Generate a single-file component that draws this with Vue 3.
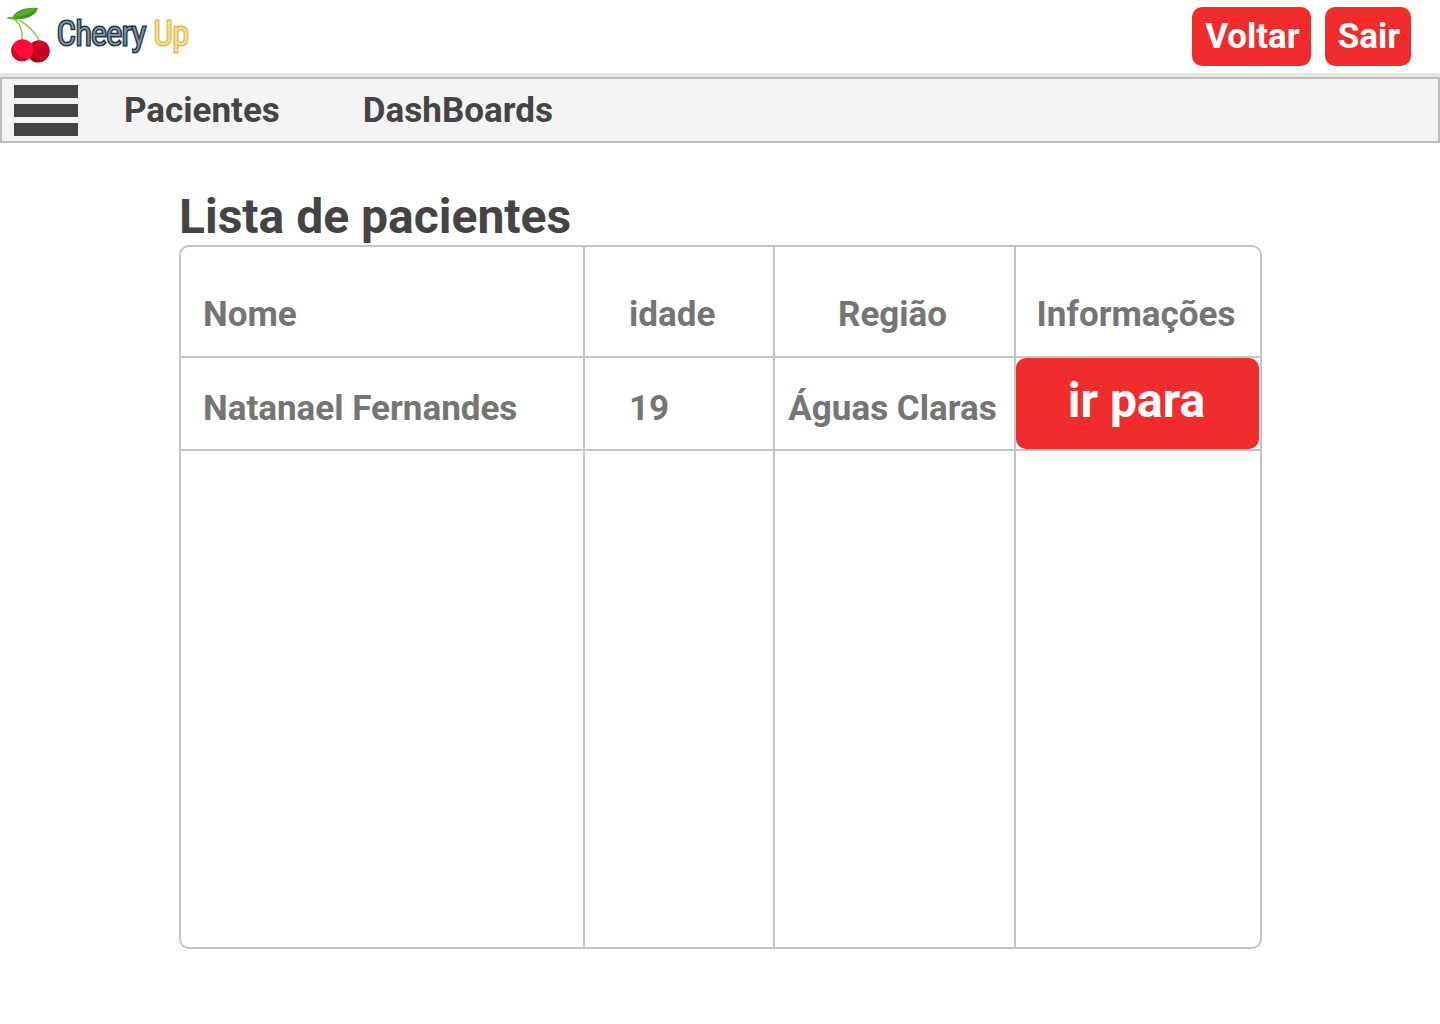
<script setup>
const patients = [{ name: 'Natanael Fernandes', age: 19, region: 'Águas Claras' }]
</script>

<template>
  <div class="page">
    <header class="topbar">
      <a class="brand" href="#" aria-label="CheeryUp">
        <svg class="cherries" viewBox="0 0 44 56" aria-hidden="true">
          <path d="M4 11 C11 13 16 21 15 33" fill="none" stroke="#7ed348" stroke-width="1.5" />
          <path d="M4 11 C15 12 27 23 33 35" fill="none" stroke="#7ed348" stroke-width="1.5" />
          <path d="M0 10 L5 10 L9 13 L1 12 Z" fill="#6cc238" />
          <path d="M5 11 C8 4 17 0 31 1 C28 10 17 14 5 11 Z" fill="#3f9122" />
          <path d="M5 11 C10 4 20 1 31 1 C24 7 15 9 5 11 Z" fill="#5bab2b" />
          <circle cx="32" cy="44" r="10.800" fill="#c90024" />
          <path d="M24 36.500 A10.800 10.800 0 1 0 38 53 C30 54.500 24 49.500 27 42.500 Z" fill="#a7001f" />
          <circle cx="15.500" cy="43" r="10.800" fill="#ff0d37" />
          <path d="M6 37.500 A10.800 10.800 0 0 0 22.500 51.300 C13 52 6 46 6 37.500 Z" fill="#cd0a2c" />
        </svg>
        <span class="wordmark"><span class="cheery">Cheery</span><span class="up">Up</span></span>
      </a>
      <div class="actions">
        <button type="button" class="btn">Voltar</button>
        <button type="button" class="btn">Sair</button>
      </div>
    </header>

    <nav class="menu">
      <button type="button" class="burger" aria-label="Menu">
        <span></span><span></span><span></span>
      </button>
      <a href="#">Pacientes</a>
      <a href="#">DashBoards</a>
    </nav>

    <main class="content">
      <h1>Lista de pacientes</h1>
      <table>
        <colgroup>
          <col />
          <col class="col-age" />
          <col class="col-region" />
          <col class="col-info" />
        </colgroup>
        <thead>
          <tr>
            <th scope="col">Nome</th>
            <th scope="col" class="age">idade</th>
            <th scope="col" class="center">Região</th>
            <th scope="col" class="center">Informações</th>
          </tr>
        </thead>
        <tbody>
          <tr v-for="p in patients" :key="p.name" class="patient">
            <td>{{ p.name }}</td>
            <td class="age">{{ p.age }}</td>
            <td class="center">{{ p.region }}</td>
            <td class="go"><button type="button" class="btn-go">ir para</button></td>
          </tr>
          <tr class="filler"><td></td><td></td><td></td><td></td></tr>
        </tbody>
      </table>
    </main>
  </div>
</template>

<style>
body {
  margin: 0;
  background: #fff;
}
</style>

<style scoped>
.page {
  font-family: Roboto, sans-serif;
  font-weight: 700;
  color: #444;
}
.topbar {
  display: flex;
  justify-content: space-between;
  padding: 7px 29px 7px 7px;
  border-bottom: 4px solid #e6e6e6;
}
.brand {
  display: flex;
  gap: 6px;
  text-decoration: none;
}
.cherries {
  width: 44px;
  height: 56px;
}
.wordmark {
  display: flex;
  gap: 8px;
  font: 300 33px/54px "Roboto Condensed", Roboto, sans-serif;
  color: #8794a1;
  paint-order: stroke fill;
}
.cheery {
  -webkit-text-stroke: 3px #24384c;
}
.up {
  color: #fae0a6;
  -webkit-text-stroke: 3px #ecb84a;
}
.actions {
  display: flex;
  gap: 14px;
}
button {
  font: inherit;
  border: 0;
  cursor: pointer;
}
.btn {
  height: 59px;
  padding: 0 11px 0 13px;
  border-radius: 10px;
  background: #f02c2c;
  color: #fff;
  font-size: 35px;
  line-height: 59px;
}
.menu {
  display: flex;
  align-items: center;
  height: 62px;
  padding: 0 12px;
  border: 2px solid #bebebe;
  background: #f4f4f4;
  font-size: 35px;
}
.menu a {
  margin-right: 83px;
  color: inherit;
  text-decoration: none;
}
.burger {
  display: flex;
  flex-direction: column;
  gap: 6px;
  width: 64px;
  margin-right: 46px;
  padding: 0;
  background: none;
}
.burger span {
  height: 13px;
  background: #444;
}
.content {
  margin: 46px 178px 0 179px;
  padding-bottom: 75px;
}
h1 {
  margin: 0;
  font-size: 48px;
  line-height: 56px;
}
table {
  width: 100%;
  table-layout: fixed;
  border: 2px solid #c4c4c4;
  border-radius: 10px;
  border-collapse: separate;
  border-spacing: 0;
  font-size: 35px;
  line-height: 42px;
  color: #757575;
}
.col-age {
  width: 190px;
}
.col-region {
  width: 241px;
}
.col-info {
  width: 244px;
}
th,
td {
  box-sizing: border-box;
  padding: 0 0 0 22px;
  border-right: 2px solid #c4c4c4;
  border-bottom: 2px solid #c4c4c4;
  text-align: left;
  vertical-align: middle;
  white-space: nowrap;
}
th {
  height: 111px;
  padding-top: 26px;
}
.patient td {
  height: 93px;
  padding-top: 10px;
}
.filler td {
  height: 496px;
}
th:last-child,
td:last-child {
  border-right: 0;
}
tr:last-child td {
  border-bottom: 0;
}
.age,
.patient .age {
  padding-left: 44px;
}
.center {
  padding-left: 0;
  padding-right: 4px;
  text-align: center;
}
.patient .go {
  padding: 0 1px 0 0;
}
.btn-go {
  display: block;
  width: 100%;
  height: 91px;
  padding: 0 2px 6px 0;
  border-radius: 10px;
  background: #f02c2c;
  color: #fff;
  font-size: 48px;
}
</style>
